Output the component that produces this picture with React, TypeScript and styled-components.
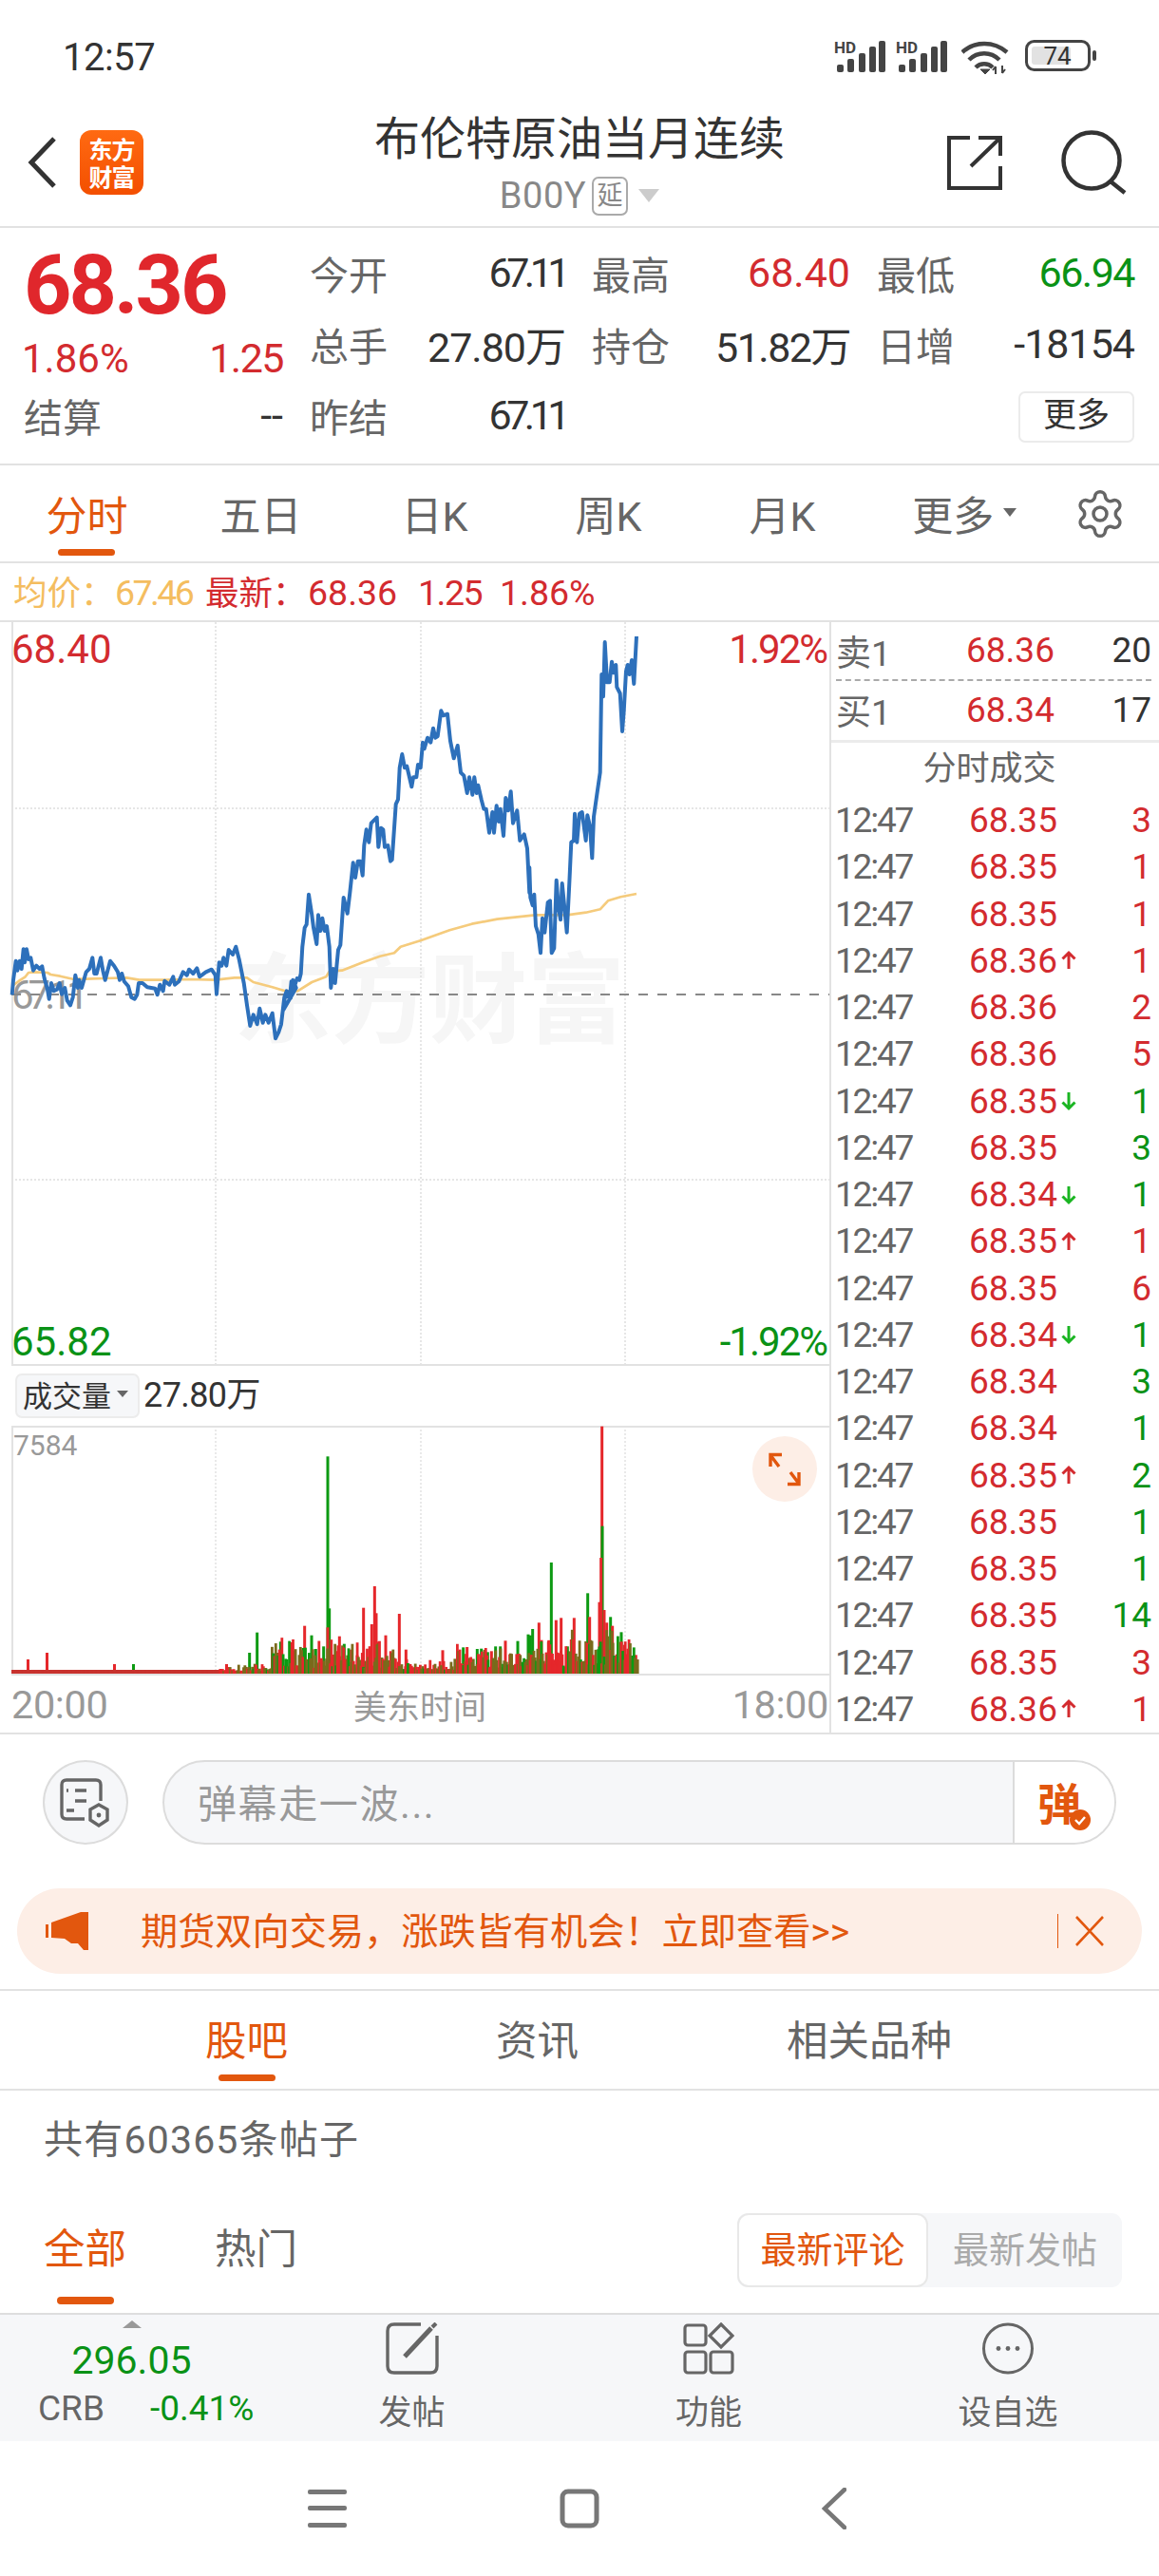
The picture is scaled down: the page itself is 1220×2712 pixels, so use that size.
import React from "react";
import styled, { createGlobalStyle } from "styled-components";
import { Settings } from "lucide-react";

const RED = "#d32b2f";
const GREEN = "#0a9216";
const ORANGE = "#e2570e";
const LINE = "#e2e2e2";

const Global = createGlobalStyle`
  html, body { margin: 0; padding: 0; background: #fff; }
  body { font-family: Roboto, "Noto Sans CJK SC", sans-serif; color: #333; }
  * { box-sizing: border-box; }
`;

const Page = styled.div`
  width: 1220px;
  height: 2712px;
  overflow: hidden;
  display: flex;
  flex-direction: column;
`;

/* status bar */
const StatusBar = styled.div`
  height: 100px;
  padding: 43px 65px 0 66px;
  display: flex;
  justify-content: space-between;
  align-items: flex-start;
`;
const Clock = styled.div`
  font-size: 40px;
  line-height: 36px;
  color: #333;
  letter-spacing: -0.5px;
`;
const StatusIcons = styled.div`
  display: flex;
  align-items: flex-start;
  gap: 11px;
  margin-top: -1px;
  & > svg:nth-child(1), & > svg:nth-child(2) { margin-top: -3px; }
  & > svg:nth-child(3) { margin-left: 4px; }
  & > svg:nth-child(4) { margin-left: 6px; }
`;

/* header */
const Header = styled.div`
  height: 140px;
  display: grid;
  grid-template-columns: 1fr auto 1fr;
  border-bottom: 2px solid ${LINE};
`;
const HeaderLeft = styled.div`
  display: flex;
  align-items: center;
  gap: 25px;
  padding-left: 29px;
  height: 142px;
`;
const Logo = styled.div`
  width: 67px;
  height: 68px;
  border-radius: 12px;
  background: linear-gradient(180deg, #ff6a12, #f34f00);
  color: #fff;
  font-family: "Noto Sans CJK SC", sans-serif;
  font-weight: 700;
  font-size: 25px;
  line-height: 29px;
  letter-spacing: -1px;
  text-align: center;
  padding-top: 5px;
`;
const TitleBlock = styled.div`
  padding-top: 22px;
  display: flex;
  flex-direction: column;
  align-items: center;
`;
const Title = styled.div`
  font-size: 48px;
  line-height: 50px;
  color: #333;
`;
const SubRow = styled.div`
  margin-top: 12px;
  height: 44px;
  display: flex;
  align-items: center;
  color: #888;
  font-size: 38px;
  letter-spacing: 0.6px;
`;
const DelayBadge = styled.span`
  width: 38px;
  height: 41px;
  margin-left: 6px;
  border: 2px solid #aaa;
  border-radius: 7px;
  font-size: 27px;
  line-height: 36px;
  text-align: center;
  color: #888;
`;
const DownTriangle = styled.span<{ $size: number; $color: string }>`
  width: 0;
  height: 0;
  margin-left: ${(p) => p.$size}px;
  border-left: ${(p) => p.$size}px solid transparent;
  border-right: ${(p) => p.$size}px solid transparent;
  border-top: ${(p) => p.$size * 1.3}px solid ${(p) => p.$color};
`;
const HeaderRight = styled.div`
  display: flex;
  justify-content: flex-end;
  align-items: center;
  gap: 62px;
  padding-right: 33px;
  height: 142px;
`;

/* stats */
const Stats = styled.div`
  height: 250px;
  padding: 12px 25px 0 25px;
  display: flex;
  gap: 29px;
  border-bottom: 2px solid ${LINE};
`;
const QuoteCol = styled.div`
  width: 273px;
  display: flex;
  flex-direction: column;
`;
const BigPrice = styled.div`
  height: 96px;
  line-height: 96px;
  font-size: 88px;
  font-weight: 700;
  color: #e0272c;
  letter-spacing: -3px;
`;
const QuoteSub = styled.div`
  height: 58px;
  margin-left: -2px;
  display: flex;
  align-items: center;
  justify-content: space-between;
  font-size: 42px;
  color: ${RED};
`;
const QuoteLast = styled.div`
  height: 62px;
  display: flex;
  align-items: center;
  justify-content: space-between;
`;
const StatGrid = styled.div`
  display: grid;
  grid-template-columns: 269px 272px 271px;
  grid-auto-rows: 75px;
  column-gap: 28px;
  margin: -3px 0 0 -1px;
`;
const Stat = styled.div`
  display: flex;
  align-items: center;
  justify-content: space-between;
`;
const StatLabel = styled.span`
  font-size: 41px;
  color: #666;
`;
const StatValue = styled.span<{ $color?: string; $track?: number }>`
  font-size: 43px;
  color: ${(p) => p.$color || "#333"};
  letter-spacing: ${(p) => p.$track || 0}px;
  white-space: nowrap;
`;
const MoreBtn = styled.div`
  grid-column: 3;
  justify-self: end;
  align-self: center;
  margin-top: 5px;
  width: 122px;
  height: 54px;
  border: 2px solid #ebebeb;
  border-radius: 7px;
  text-align: center;
  font-size: 35px;
  line-height: 48px;
  color: #333;
`;

/* period tabs */
const PeriodBar = styled.div`
  height: 103px;
  display: flex;
  border-bottom: 2px solid ${LINE};
`;
const PeriodTab = styled.div<{ $active?: boolean; $pad?: number }>`
  position: relative;
  width: 183px;
  padding-bottom: 2px;
  padding-left: ${(p) => p.$pad || 0}px;
  text-align: center;
  font-size: 43px;
  color: ${(p) => (p.$active ? ORANGE : "#666")};
  display: flex;
  justify-content: center;
  align-items: center;
  gap: 2px;
  ${(p) =>
    p.$active &&
    `&::after {
      content: "";
      position: absolute;
      left: 61px;
      width: 60px;
      height: 7px;
      top: 88px;
      border-radius: 4px;
      background: ${ORANGE};
    }`}
`;
const GearBox = styled.div`
  flex: 1;
  display: flex;
  align-items: center;
  justify-content: center;
  padding-right: 3px;
  padding-top: 1px;
  color: #666;
`;

/* summary */
const Summary = styled.div`
  height: 62px;
  padding-left: 14px;
  display: flex;
  align-items: baseline;
  line-height: 62px;
  white-space: nowrap;
  border-bottom: 2px solid ${LINE};
  font-size: 37.5px;
  color: ${RED};
`;
const AvgLabel = styled.span`
  color: #f4bd5f;
  font-size: 35.5px;
  width: 107px;
  flex-shrink: 0;
`;
const AvgValue = styled.span`
  color: #f4bd5f;
  width: 95px;
  letter-spacing: -2.6px;
`;
const LatestLabel = styled.span`
  font-size: 35.5px;
  width: 108px;
  flex-shrink: 0;
`;
const SummaryNum = styled.span<{ $w: number; $track?: number }>`
  width: ${(p) => p.$w}px;
  letter-spacing: ${(p) => p.$track || 0}px;
`;

/* chart */
const ChartArea = styled.div`
  height: 1171px;
  display: flex;
  border-bottom: 2px solid ${LINE};
  overflow: hidden;
`;
const ChartCol = styled.div`
  width: 873px;
  display: flex;
  flex-direction: column;
`;
const MainChart = styled.div`
  position: relative;
  height: 783px;
`;
const Canvas = styled.svg`
  display: block;
  position: absolute;
  inset: 0;
`;
const Watermark = styled.div`
  position: absolute;
  left: 246px;
  top: 331px;
  font-family: "Noto Sans CJK SC", sans-serif;
  font-weight: 700;
  font-size: 103px;
  line-height: 120px;
  color: #f6f6f6;
  white-space: nowrap;
`;
const ChartTag = styled.div<{ $color: string; $right?: boolean; $y: number; $track?: number }>`
  position: absolute;
  ${(p) => (p.$right ? "right: 3px;" : "left: 12px;")}
  top: ${(p) => p.$y}px;
  font-size: 42px;
  line-height: 44px;
  color: ${(p) => p.$color};
  letter-spacing: ${(p) => (p.$right ? -2 : p.$track || 0)}px;
`;
const VolHead = styled.div`
  height: 63px;
  padding: 8px 0 0 16px;
  display: flex;
  align-items: flex-start;
  gap: 4px;
`;
const VolPill = styled.div`
  width: 131px;
  height: 47px;
  padding: 0 0 4px 6px;
  background: #f6f7f9;
  border: 2px solid #ececec;
  border-radius: 7px;
  display: flex;
  align-items: center;
  font-size: 31px;
  color: #333;
`;
const VolValue = styled.div`
  font-size: 36px;
  line-height: 46px;
  color: #333;
  letter-spacing: -0.6px;
`;
const VolChart = styled.div`
  position: relative;
  height: 263px;
`;
const VolMax = styled.div`
  position: absolute;
  left: 14px;
  top: 3px;
  font-size: 30px;
  line-height: 36px;
  color: #999;
`;
const ExpandBtn = styled.div`
  position: absolute;
  left: 792px;
  top: 11px;
  width: 68px;
  height: 69px;
  border-radius: 50%;
  background: #fdeee6;
  display: flex;
  align-items: center;
  justify-content: center;
`;
const AxisRow = styled.div`
  flex: 1;
  padding: 0 1px 0 12px;
  display: flex;
  justify-content: space-between;
  align-items: center;
  color: #999;
  font-size: 41.5px;
`;
const AxisMid = styled.span`
  font-size: 35px;
`;
const AxisEnd = styled.span`
  letter-spacing: -0.4px;
`;

/* order book */
const BookCol = styled.div`
  flex: 1;
  min-width: 0;
  border-left: 2px solid ${LINE};
  display: flex;
  flex-direction: column;
`;
const BookRow = styled.div<{ $dashed?: boolean }>`
  height: 63px;
  padding: 0 8px 0 5px;
  display: grid;
  grid-template-columns: 137px 1fr auto;
  align-items: center;
  font-size: 37px;
  ${(p) => p.$dashed && "border-bottom: 2px dashed #aaa; margin: 0 8px 0 5px; padding: 0;"}
`;
const BookLabel = styled.span`
  color: #666;
`;
const BookPrice = styled.span`
  color: ${RED};
`;
const BookQty = styled.span`
  color: #333;
`;
const TickTitle = styled.div`
  height: 61px;
  border-top: 3px solid #ebebeb;
  margin-top: 1px;
  text-align: center;
  font-size: 35px;
  line-height: 56px;
  color: #666;
  padding-right: 12px;
`;
const TickList = styled.div`
  display: flex;
  flex-direction: column;
`;
const TickRow = styled.div`
  height: 49.26px;
  flex-shrink: 0;
  padding: 0 8px 0 4px;
  display: grid;
  grid-template-columns: 141px 1fr auto;
  align-items: center;
  font-size: 37px;
  line-height: 49px;
`;
const TickTime = styled.span`
  color: #666;
  letter-spacing: -2.2px;
`;
const TickPrice = styled.span`
  color: ${RED};
  display: flex;
  align-items: center;
  gap: 4px;
`;
const TickQty = styled.span<{ $up: boolean }>`
  color: ${(p) => (p.$up ? RED : GREEN)};
`;

/* input */
const InputSection = styled.div`
  height: 270px;
  padding-top: 27px;
  border-bottom: 2px solid ${LINE};
`;
const InputRow = styled.div`
  display: flex;
  gap: 36px;
  padding-left: 45px;
`;
const RoundBtn = styled.div`
  width: 90px;
  height: 89px;
  border-radius: 50%;
  border: 2px solid #dcdcdc;
  background: #f6f7f9;
  display: flex;
  align-items: center;
  justify-content: center;
`;
const InputPill = styled.div`
  width: 1004px;
  height: 89px;
  border: 2px solid #dcdcdc;
  border-radius: 45px;
  background: #f6f7f9;
  display: flex;
  overflow: hidden;
`;
const Placeholder = styled.div`
  flex: 1;
  padding-left: 35px;
  font-size: 41px;
  line-height: 90px;
  letter-spacing: 1.6px;
  color: #999;
`;
const SendBox = styled.div`
  width: 107px;
  background: #fff;
  border-left: 2px solid #dcdcdc;
  position: relative;
`;
const SendGlyph = styled.span`
  position: absolute;
  left: 24px;
  top: 14px;
  font-family: "Noto Sans CJK SC", sans-serif;
  font-weight: 700;
  font-size: 46px;
  line-height: 54px;
  color: ${ORANGE};
`;
const SendCheck = styled.svg`
  position: absolute;
  left: 58px;
  top: 50px;
`;
const Banner = styled.div`
  margin: 46px 18px 0;
  height: 90px;
  border-radius: 45px;
  background: #fdeee6;
  padding: 0 39px 0 30px;
  display: flex;
  align-items: center;
  color: ${ORANGE};
`;
const BannerText = styled.div`
  margin: -6px 0 0 54px;
  font-size: 39.2px;
  white-space: nowrap;
`;
const BannerClose = styled.div`
  margin-left: auto;
  display: flex;
  align-items: center;
  gap: 17px;
`;
const BannerSep = styled.div`
  width: 1.5px;
  height: 36px;
  background: ${ORANGE};
`;

/* posts */
const PostTabs = styled.div`
  height: 105px;
  padding-left: 216px;
  display: flex;
  gap: 219px;
  border-bottom: 2px solid ${LINE};
`;
const PostTab = styled.div<{ $active?: boolean }>`
  position: relative;
  font-size: 43.5px;
  line-height: 108px;
  color: ${(p) => (p.$active ? ORANGE : "#666")};
  ${(p) =>
    p.$active &&
    `&::after {
      content: "";
      position: absolute;
      left: 14px;
      width: 60px;
      height: 7px;
      top: 88px;
      border-radius: 4px;
      background: ${ORANGE};
    }`}
`;
const CountRow = styled.div`
  height: 101px;
  padding-left: 46px;
  font-size: 41px;
  letter-spacing: 1.2px;
  line-height: 104px;
  color: #666;
`;
const FilterRow = styled.div`
  height: 133px;
  padding: 28px 39px 0 46px;
  display: flex;
  align-items: flex-start;
`;
const FilterTab = styled.div<{ $active?: boolean }>`
  position: relative;
  font-size: 43.5px;
  line-height: 78px;
  margin-right: 93px;
  color: ${(p) => (p.$active ? ORANGE : "#666")};
  ${(p) =>
    p.$active &&
    `&::after {
      content: "";
      position: absolute;
      left: 14px;
      width: 60px;
      height: 8px;
      top: 88px;
      border-radius: 4px;
      background: ${ORANGE};
    }`}
`;
const SortToggle = styled.div`
  margin-left: auto;
  width: 405px;
  height: 78px;
  border-radius: 11px;
  background: #f6f7f9;
  display: flex;
`;
const SortItem = styled.div<{ $active?: boolean }>`
  width: ${(p) => (p.$active ? 201 : 204)}px;
  height: 78px;
  border-radius: 12px;
  font-size: 38px;
  line-height: ${(p) => (p.$active ? 74 : 78)}px;
  text-align: center;
  color: ${(p) => (p.$active ? ORANGE : "#aaa")};
  ${(p) => p.$active && "background: #fff; border: 2px solid #e8e8e8;"}
`;

/* footer */
const Footer = styled.div`
  height: 135px;
  background: #f6f7f9;
  border-top: 2px solid #dedede;
  display: flex;
`;
const IndexCol = styled.div`
  width: 277px;
  padding-top: 6px;
  display: flex;
  flex-direction: column;
  align-items: center;
`;
const UpTriangle = styled.div`
  width: 0;
  height: 0;
  border-left: 10px solid transparent;
  border-right: 10px solid transparent;
  border-bottom: 8px solid #999;
`;
const IndexValue = styled.div`
  margin-top: 12px;
  font-size: 41px;
  line-height: 44px;
  color: ${GREEN};
`;
const IndexRow = styled.div`
  width: 100%;
  margin-top: 7px;
  padding-left: 40px;
  display: flex;
  gap: 48px;
  font-size: 37px;
  line-height: 44px;
  color: #666;
`;
const IndexChange = styled.span`
  color: ${GREEN};
`;
const ActionCol = styled.div<{ $w: number }>`
  width: ${(p) => p.$w}px;
  padding-top: 8px;
  display: flex;
  flex-direction: column;
  align-items: center;
`;
const ActionLabel = styled.div`
  margin-top: 21px;
  font-size: 35px;
  line-height: 40px;
  color: #666;
`;

/* nav bar */
const NavBar = styled.div`
  height: 142px;
  padding-left: 324px;
  display: flex;
  align-items: center;
`;
const NavGap = styled.div<{ $w: number }>`
  width: ${(p) => p.$w}px;
`;

/* chart data traced from the reference */
type P = [number, number];
const map = (pts: P[], ox: number, oy: number): P[] => pts.map(([x, y]) => [ox + x / 3, oy + y / 3]);
const str = (pts: P[]) => pts.map(([x, y]) => `${x.toFixed(1)},${y.toFixed(1)}`).join(" ");

const blueA: P[] = [[38,262],[42,215],[50,155],[55,185],[62,155],[68,180],[74,118],[78,160],[84,118],[90,150],[97,145],[105,185],[115,170],[125,180],[133,172],[140,210],[150,245],[155,275],[162,225],[170,250],[180,245],[188,225],[195,260],[205,240],[212,280],[222,295],[230,270],[238,200],[246,240],[250,215],[258,240],[265,215],[272,190],[282,180],[292,145],[298,195],[305,195],[318,145],[325,185],[332,215],[348,155],[360,170],[372,190],[378,215],[385,195],[392,220],[405,235],[415,270],[425,275],[433,262],[438,225],[450,225],[465,238],[490,242],[497,262],[505,230],[515,250],[520,218],[535,230],[547,205],[552,230],[565,220],[578,190],[590,200],[597,182],[610,195],[622,178],[630,205],[650,190],[668,182],[680,200],[684,260],[692,160],[700,170],[706,145],[715,170],[722,120],[735,135],[745,110],[755,150],[770,225],[780,295],[790,360],[800,325],[812,355],[820,305],[830,350],[838,325],[848,350],[860,320],[870,400],[880,380],[888,355],[898,270],[905,250],[918,272],[925,215],[935,240]];
const blueB: P[] = [[-5,1030],[0,985],[15,990],[20,940],[30,955],[38,930],[45,935],[50,915],[55,830],[62,770],[68,760],[75,665],[85,730],[90,770],[100,822],[105,730],[112,780],[118,740],[125,780],[132,765],[140,830],[145,960],[152,900],[158,945],[168,840],[175,825],[185,675],[197,725],[205,660],[215,565],[222,612],[230,560],[238,560],[245,605],[250,510],[257,460],[265,500],[272,440],[290,422],[295,515],[303,455],[310,460],[315,515],[325,510],[333,560],[338,555],[350,380],[357,365],[362,265],[370,222],[378,265],[385,260],[400,325],[405,295],[415,295],[420,255],[428,265],[435,185],[440,205],[450,170],[460,185],[468,140],[475,170],[482,165],[493,85],[500,100],[513,95],[522,180],[533,235],[545,195],[555,280],[565,290],[575,345],[582,295],[592,350],[598,295],[605,345],[610,320],[620,365],[628,395],[635,395],[645,470],[655,405],[660,470],[668,385],[675,435],[680,395],[690,480],[697,360],[705,400],[713,340],[720,440],[733,400],[742,495],[755,475],[765,520],[772,660]];
const blueC: P[] = [[352,760],[355,855],[362,880],[367,845],[372,945],[380,970],[387,1030],[393,920],[400,965],[410,870],[417,865],[422,1030],[430,1015],[437,800],[443,880],[450,925],[455,810],[462,880],[470,965],[478,810],[484,680],[492,675],[495,590],[502,680],[510,590],[518,585],[530,675],[535,595],[543,630],[550,730],[555,600],[565,530],[575,460],[580,150],[585,220],[590,48],[597,175],[605,175],[612,110],[618,145],[625,120],[628,190],[638,210],[645,330],[650,265],[657,140],[662,120],[668,150],[675,105],[682,180],[690,30]];
const bluePts = str([...map(blueA, 0, 960), ...map(blueB, 300, 720), ...map(blueC, 440, 660)]);

const avgA: P[] = [[38,235],[60,218],[80,205],[90,192],[110,190],[150,192],[160,198],[190,203],[230,212],[270,212],[330,210],[400,208],[440,215],[520,215],[600,213],[680,215],[740,208],[780,208],[800,222],[860,238],[900,250],[940,250],[985,222],[1030,205],[1040,188],[1080,185],[1145,160],[1200,140]];
const avgB: P[] = [[345,850],[365,830],[430,810]];
const avgC: P[] = [[10,990],[100,958],[170,938],[250,923],[370,910],[470,910],[530,902],[575,892],[600,865],[640,853],[690,843]];
const avgPts = str([...map(avgA, 0, 960), ...map(avgB, 300, 720), ...map(avgC, 440, 660)]);

type Bar = { x: number; top: number; c: string; w: number };
const barRed = "#e5272b";
const barGreen = "#0c9a12";
const barOlive = "#7a6a1c";
const spikes: [number, number, "r" | "g"][] = [[345,100,"g"],[350,580,"g"],[1211,5,"r"],[1212,320,"g"],[1051,435,"g"],[493,510,"r"],[458,578,"r"],[571,597,"r"],[122,656,"g"],[272,635,"r"],[98,720,"g"],[196,685,"g"],[186,720,"r"],[237,713,"g"],[294,665,"g"],[267,705,"g"],[307,708,"g"],[332,700,"g"],[345,640,"r"],[382,668,"r"],[397,692,"g"],[378,697,"r"],[419,710,"r"],[438,728,"r"],[484,630,"r"],[498,595,"r"],[505,685,"r"],[528,665,"r"],[592,710,"r"],[708,712,"r"],[773,703,"g"],[785,702,"r"],[817,708,"g"],[830,707,"g"],[850,718,"g"],[862,715,"r"],[875,700,"g"],[890,700,"g"],[906,682,"r"],[920,725,"r"],[945,683,"g"],[978,662,"g"],[985,665,"g"],[992,645,"g"],[1012,625,"r"],[1020,680,"r"],[1042,685,"r"],[1066,617,"r"],[1082,610,"r"],[1102,700,"g"],[1114,678,"r"],[1123,610,"r"],[1166,532,"g"],[1172,607,"r"],[1203,560,"r"],[1208,420,"r"],[1218,585,"r"],[1226,625,"r"],[1238,607,"g"],[1244,635,"r"],[1272,655,"g"],[1282,695,"r"],[1307,730,"r"],[1318,727,"r"]];

const buildBars = (): Bar[] => {
  const bars: Bar[] = [];
  const base = 1762;
  const leftBars: [number, number, string][] = [[28,1747,barRed],[48,1740,barRed],[119,1752,barRed],[139,1752,barGreen],[237,1752,barRed]];
  leftBars.forEach(([x, top, c]) => bars.push({ x, top, c, w: 3 }));
  spikes.forEach(([vx, vy, c]) =>
    bars.push({ x: 230 + vx / 3 - 1.5, top: 1500 + vy / 3, c: c === "r" ? barRed : barGreen, w: 3 })
  );
  let seed = 11;
  const rnd = () => {
    seed = (seed * 1103515245 + 12345) & 0x7fffffff;
    return seed / 0x7fffffff;
  };
  for (let x = 12; x < 670; x += 1.3) {
    let env = 3;
    let floor = 2.5;
    if (x > 230 && x < 285) env = 8;
    else if (x >= 285 && x < 420) { env = 34; floor = 6; }
    else if (x >= 420 && x < 480) { env = 15; floor = 4; }
    else if (x >= 480 && x < 600) { env = 30; floor = 6; }
    else if (x >= 600) { env = 48; floor = 8; }
    const h = x < 230 ? 4 : floor + Math.sqrt(rnd()) * rnd() * env;
    const r = rnd();
    const c = x < 230 ? "#c8332f" : r < 0.5 ? barOlive : r < 0.85 ? barRed : barGreen;
    bars.push({ x, top: base - h, c, w: 2.8 });
  }
  return bars;
};
const volBars = buildBars();

type Tick = { p: string; q: string; up: boolean; a?: "u" | "d" };
const ticks: Tick[] = [
  { p: "68.35", q: "3", up: true },
  { p: "68.35", q: "1", up: true },
  { p: "68.35", q: "1", up: true },
  { p: "68.36", q: "1", up: true, a: "u" },
  { p: "68.36", q: "2", up: true },
  { p: "68.36", q: "5", up: true },
  { p: "68.35", q: "1", up: false, a: "d" },
  { p: "68.35", q: "3", up: false },
  { p: "68.34", q: "1", up: false, a: "d" },
  { p: "68.35", q: "1", up: true, a: "u" },
  { p: "68.35", q: "6", up: true },
  { p: "68.34", q: "1", up: false, a: "d" },
  { p: "68.34", q: "3", up: false },
  { p: "68.34", q: "1", up: false },
  { p: "68.35", q: "2", up: false, a: "u" },
  { p: "68.35", q: "1", up: false },
  { p: "68.35", q: "1", up: false },
  { p: "68.35", q: "14", up: false },
  { p: "68.35", q: "3", up: true },
  { p: "68.36", q: "1", up: true, a: "u" },
];

/* icons */
const Signal = () => (
  <svg width="54" height="38" viewBox="0 -3 54 38">
    <text x="0" y="14" fontFamily="Roboto, sans-serif" fontWeight="700" fontSize="17" fill="#444">HD</text>
    {[[3, 8], [14, 14], [26, 20], [37, 27], [47, 33]].map(([x, h]) => (
      <rect key={x} x={x} y={34 - h} width="7" height={h} rx="2" fill="#444" />
    ))}
  </svg>
);
const Wifi = () => (
  <svg width="50" height="37" viewBox="0 0 50 37" fill="none" stroke="#444" strokeWidth="4.5">
    <path d="M1 13 C14 1 34 1 48 13" />
    <path d="M8 21 C17 12 31 12 40 21" />
    <path d="M15 29 C20 24 28 24 33 29" />
    <path d="M20 31 L25 36 L30 31 Z" fill="#444" strokeWidth="1" />
    <path d="M36 28 V36 M33 32 L36 28 M43 27 V35 M43 35 L46 31" strokeWidth="2" />
  </svg>
);
const Battery = () => (
  <svg width="76" height="34" viewBox="0 0 76 34">
    <rect x="1.5" y="1.5" width="66" height="30" rx="8" fill="none" stroke="#444" strokeWidth="3" />
    <rect x="7" y="7" width="41" height="19" rx="3" fill="#e2e2e2" />
    <rect x="71" y="11" width="4" height="11" rx="2" fill="#444" />
    <text x="34" y="26" textAnchor="middle" fontFamily="Roboto, sans-serif" fontSize="26" fill="#333">74</text>
  </svg>
);
const BackIcon = () => (
  <svg width="30" height="54" viewBox="0 0 30 54" fill="none" stroke="#333" strokeWidth="5">
    <path d="M28 2 L4 27 L28 52" />
  </svg>
);
const ShareIcon = () => (
  <svg width="58" height="58" viewBox="0 0 58 58" fill="none" stroke="#333" strokeWidth="4">
    <path d="M24 3 H2 V56 H56 V33" />
    <path d="M33 3 H56 V22" />
    <path d="M56 3 L25 33" />
  </svg>
);
const SearchIcon = () => (
  <svg width="70" height="68" viewBox="0 0 70 68" fill="none" stroke="#333" strokeWidth="4.5">
    <circle cx="32" cy="32" r="29.5" />
    <path d="M52 54 L67 66" />
  </svg>
);
const ArrowIcon = ({ down }: { down?: boolean }) => (
  <svg width="16" height="22" viewBox="0 0 16 22" fill="none" stroke={down ? "#1ab522" : RED} strokeWidth="3">
    {down ? <path d="M8 2 V19 M1.5 12.5 L8 19 L14.5 12.5" /> : <path d="M8 20 V3 M1.5 9.5 L8 3 L14.5 9.5" />}
  </svg>
);

export default function App() {
  return (
    <Page>
      <Global />
      <StatusBar>
        <Clock>12:57</Clock>
        <StatusIcons>
          <Signal />
          <Signal />
          <Wifi />
          <Battery />
        </StatusIcons>
      </StatusBar>

      <Header>
        <HeaderLeft>
          <BackIcon />
          <Logo>东方<br />财富</Logo>
        </HeaderLeft>
        <TitleBlock>
          <Title>布伦特原油当月连续</Title>
          <SubRow>
            B00Y
            <DelayBadge>延</DelayBadge>
            <DownTriangle $size={11} $color="#ccc" />
          </SubRow>
        </TitleBlock>
        <HeaderRight>
          <ShareIcon />
          <SearchIcon />
        </HeaderRight>
      </Header>

      <Stats>
        <QuoteCol>
          <BigPrice>68.36</BigPrice>
          <QuoteSub>
            <span>1.86%</span>
            <StatValue $color={RED} $track={-1.5}>1.25</StatValue>
          </QuoteSub>
          <QuoteLast>
            <StatLabel>结算</StatLabel>
            <StatValue>--</StatValue>
          </QuoteLast>
        </QuoteCol>
        <StatGrid>
          <Stat><StatLabel>今开</StatLabel><StatValue $track={-5.5}>67.11</StatValue></Stat>
          <Stat><StatLabel>最高</StatLabel><StatValue $color={RED}>68.40</StatValue></Stat>
          <Stat><StatLabel>最低</StatLabel><StatValue $color={GREEN} $track={-1.5}>66.94</StatValue></Stat>
          <Stat><StatLabel>总手</StatLabel><StatValue $track={-1}>27.80万</StatValue></Stat>
          <Stat><StatLabel>持仓</StatLabel><StatValue $track={-1.5}>51.82万</StatValue></Stat>
          <Stat><StatLabel>日增</StatLabel><StatValue $track={-1}>-18154</StatValue></Stat>
          <Stat><StatLabel>昨结</StatLabel><StatValue $track={-5.5}>67.11</StatValue></Stat>
          <MoreBtn>更多</MoreBtn>
        </StatGrid>
      </Stats>

      <PeriodBar>
        <PeriodTab $active>分时</PeriodTab>
        <PeriodTab>五日</PeriodTab>
        <PeriodTab>日K</PeriodTab>
        <PeriodTab>周K</PeriodTab>
        <PeriodTab>月K</PeriodTab>
        <PeriodTab $pad={17}>更多<DownTriangle $size={7.5} $color="#666" /></PeriodTab>
        <GearBox><Settings size={56} strokeWidth={1.5} /></GearBox>
      </PeriodBar>

      <Summary>
        <AvgLabel>均价：</AvgLabel>
        <AvgValue>67.46</AvgValue>
        <LatestLabel>最新：</LatestLabel>
        <SummaryNum $w={116}>68.36</SummaryNum>
        <SummaryNum $w={86} $track={-1.5}>1.25</SummaryNum>
        <span>1.86%</span>
      </Summary>

      <ChartArea>
        <ChartCol>
          <MainChart>
            <Watermark>东方财富</Watermark>
            <ChartTag $color="#999" $y={371} $track={-6}>67.11</ChartTag>
            <Canvas width="875" height="783" viewBox="0 655 875 783">
              <g stroke="#dedede" strokeWidth="1.5" strokeDasharray="2 2">
                <path d="M227 655V1437 M443 655V1437 M658 655V1437 M12 851H873 M12 1242H873" />
              </g>
              <path d="M13 655V1437 M12 1437H873" stroke={LINE} strokeWidth="2" fill="none" />
              <path d="M12 1047H873" stroke="#888" strokeWidth="2" strokeDasharray="10 10" />
              <polyline points={avgPts} fill="none" stroke="#f5cb7c" strokeWidth="2.7" strokeLinejoin="round" />
              <polyline points={bluePts} fill="none" stroke="#2d70bb" strokeWidth="4" strokeLinejoin="round" />
            </Canvas>
            <ChartTag $color={RED} $y={7}>68.40</ChartTag>
            <ChartTag $color={RED} $right $y={7}>1.92%</ChartTag>
            <ChartTag $color={GREEN} $y={736}>65.82</ChartTag>
            <ChartTag $color={GREEN} $right $y={736}>-1.92%</ChartTag>
          </MainChart>

          <VolHead>
            <VolPill>成交量<DownTriangle $size={6} $color="#666" /></VolPill>
            <VolValue>27.80万</VolValue>
          </VolHead>

          <VolChart>
            <Canvas width="875" height="263" viewBox="0 1501 875 263">
              <g stroke="#e2e2e2" strokeWidth="1.5" strokeDasharray="2 2">
                <path d="M227 1501V1762 M443 1501V1762 M658 1501V1762" />
              </g>
              <path d="M13 1501V1763 M12 1502H873 M12 1763H873" stroke={LINE} strokeWidth="2" fill="none" />
              {volBars.map((b, i) => (
                <rect key={i} x={b.x} y={b.top} width={b.w} height={1762 - b.top} fill={b.c} />
              ))}
            </Canvas>
            <VolMax>7584</VolMax>
            <ExpandBtn>
              <svg width="36" height="36" viewBox="0 0 36 36" fill="none" stroke={ORANGE} strokeWidth="3.4">
                <path d="M3 15 V2.5 H15 M3 3 L12 15" />
                <path d="M33 21 V33.5 H21 M33 33 L24 21" />
              </svg>
            </ExpandBtn>
          </VolChart>

          <AxisRow>
            <AxisEnd>20:00</AxisEnd>
            <AxisMid>美东时间</AxisMid>
            <AxisEnd>18:00</AxisEnd>
          </AxisRow>
        </ChartCol>

        <BookCol>
          <BookRow $dashed>
            <BookLabel>卖1</BookLabel>
            <BookPrice>68.36</BookPrice>
            <BookQty>20</BookQty>
          </BookRow>
          <BookRow>
            <BookLabel>买1</BookLabel>
            <BookPrice>68.34</BookPrice>
            <BookQty>17</BookQty>
          </BookRow>
          <TickTitle>分时成交</TickTitle>
          <TickList>
            {ticks.map((t, i) => (
              <TickRow key={i}>
                <TickTime>12:47</TickTime>
                <TickPrice>
                  {t.p}
                  {t.a && <ArrowIcon down={t.a === "d"} />}
                </TickPrice>
                <TickQty $up={t.up}>{t.q}</TickQty>
              </TickRow>
            ))}
          </TickList>
        </BookCol>
      </ChartArea>

      <InputSection>
        <InputRow>
          <RoundBtn>
            <svg width="56" height="56" viewBox="0 0 56 56" fill="none" stroke="#666" strokeWidth="3.4">
              <path d="M44 26 V9 Q44 4 39 4 H8 Q3 4 3 9 V40 Q3 45 8 45 H27" />
              <path d="M17 15 H29 M17 26 H29 M8 15 H10 M8 36 H16" />
              <path d="M42 30 L51 35 V46 L42 52 L33 46 V35 Z" />
              <circle cx="42" cy="41" r="2.4" fill="#666" stroke="none" />
            </svg>
          </RoundBtn>
          <InputPill>
            <Placeholder>弹幕走一波...</Placeholder>
            <SendBox>
              <SendGlyph>弹</SendGlyph>
              <SendCheck width="22" height="22" viewBox="0 0 22 22">
                <circle cx="11" cy="11" r="11" fill={ORANGE} />
                <path d="M6 11 L10 15 L16 8" fill="none" stroke="#fff" strokeWidth="2.4" />
              </SendCheck>
            </SendBox>
          </InputPill>
        </InputRow>
        <Banner>
          <svg width="46" height="40" viewBox="0 0 46 40">
            <path d="M0 13 H3 V27 H0 Z M6 11 L37 0 H45 V40 H40 L34 33 L27 33 L20 28 L6 27 Z" fill={ORANGE} />
          </svg>
          <BannerText>期货双向交易，涨跌皆有机会！立即查看&gt;&gt;</BannerText>
          <BannerClose>
            <BannerSep />
            <svg width="32" height="32" viewBox="0 0 32 32" stroke={ORANGE} strokeWidth="2.6">
              <path d="M2 1 L30 31 M30 1 L2 31" />
            </svg>
          </BannerClose>
        </Banner>
      </InputSection>

      <PostTabs>
        <PostTab $active>股吧</PostTab>
        <PostTab>资讯</PostTab>
        <PostTab>相关品种</PostTab>
      </PostTabs>
      <CountRow>共有60365条帖子</CountRow>
      <FilterRow>
        <FilterTab $active>全部</FilterTab>
        <FilterTab>热门</FilterTab>
        <SortToggle>
          <SortItem $active>最新评论</SortItem>
          <SortItem>最新发帖</SortItem>
        </SortToggle>
      </FilterRow>

      <Footer>
        <IndexCol>
          <UpTriangle />
          <IndexValue>296.05</IndexValue>
          <IndexRow>
            <span>CRB</span>
            <IndexChange>-0.41%</IndexChange>
          </IndexRow>
        </IndexCol>
        <ActionCol $w={313}>
          <svg width="56" height="55" viewBox="0 0 56 55" fill="none" stroke="#666" strokeWidth="3.4">
            <path d="M37 2 H9 Q2 2 2 9 V46 Q2 53 9 53 H47 Q54 53 54 46 V14" />
            <path d="M20 36 L48 6" strokeWidth="5" />
            <path d="M49 5 L53 1" strokeWidth="4" />
          </svg>
          <ActionLabel>发帖</ActionLabel>
        </ActionCol>
        <ActionCol $w={312}>
          <svg width="54" height="55" viewBox="0 0 54 55" fill="none" stroke="#666" strokeWidth="3.2">
            <rect x="2" y="3" width="22" height="21" rx="3" />
            <path d="M40 2 L52 14 L40 26 L28 14 Z" />
            <rect x="2" y="31" width="22" height="22" rx="3" />
            <rect x="29" y="31" width="23" height="22" rx="3" />
          </svg>
          <ActionLabel>功能</ActionLabel>
        </ActionCol>
        <ActionCol $w={318}>
          <svg width="56" height="55" viewBox="0 0 56 55" fill="none" stroke="#666" strokeWidth="3">
            <circle cx="28" cy="27.5" r="25.5" />
            <circle cx="18" cy="27.5" r="2.4" fill="#666" stroke="none" />
            <circle cx="28" cy="27.5" r="2.4" fill="#666" stroke="none" />
            <circle cx="38" cy="27.5" r="2.4" fill="#666" stroke="none" />
          </svg>
          <ActionLabel>设自选</ActionLabel>
        </ActionCol>
      </Footer>

      <NavBar>
        <svg width="41" height="40" viewBox="0 0 41 40" fill="#777">
          <rect x="0" y="0" width="41" height="5" rx="2" />
          <rect x="0" y="17" width="41" height="5" rx="2" />
          <rect x="0" y="35" width="41" height="5" rx="2" />
        </svg>
        <NavGap $w={224} />
        <svg width="42" height="42" viewBox="0 0 42 42" fill="none" stroke="#777" strokeWidth="5">
          <rect x="3" y="3" width="36" height="36" rx="6" />
        </svg>
        <NavGap $w={234} />
        <svg width="26" height="44" viewBox="0 0 26 44" fill="none" stroke="#777" strokeWidth="4.6" strokeLinecap="round">
          <path d="M24 2 L3 22 L24 42" />
        </svg>
      </NavBar>
    </Page>
  );
}
